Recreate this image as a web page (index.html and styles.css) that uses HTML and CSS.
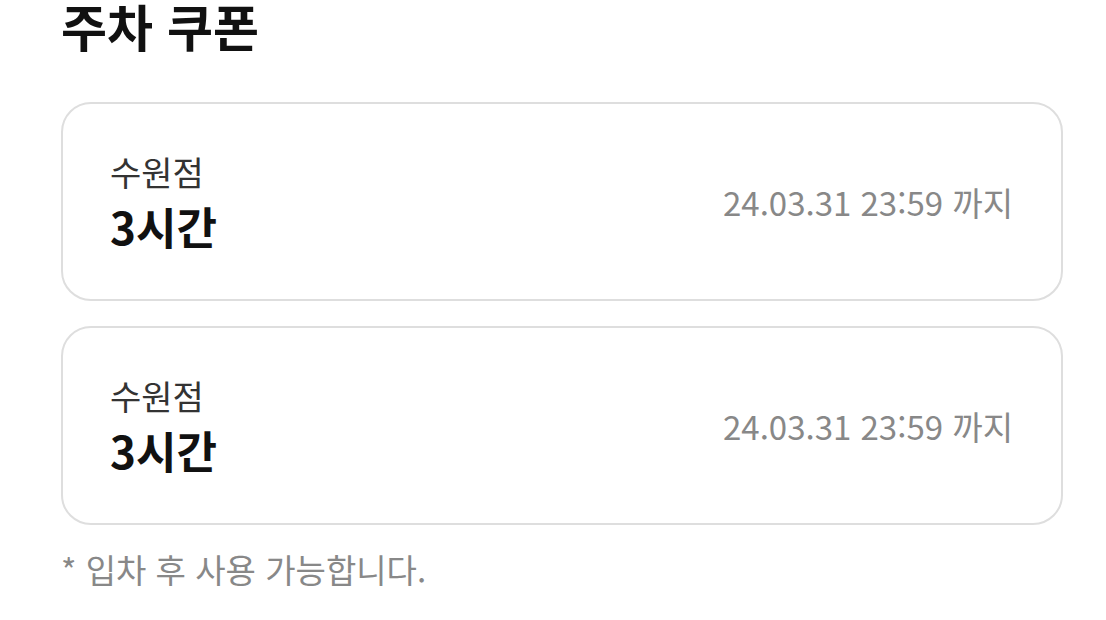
FILE: index.html
```html
<!DOCTYPE html>
<html lang="ko">
<head>
  <meta charset="UTF-8">
  <title>주차 쿠폰</title>
  <link rel="stylesheet" href="styles.css">
</head>
<body>
  <div class="page">
    <h2 class="title">주차 쿠폰</h2>

    <div class="coupon-list">
      <div class="coupon">
        <div class="coupon-info">
          <p class="store">수원점</p>
          <p class="duration">3시간</p>
        </div>
        <p class="expire">24.03.31 23:59 까지</p>
      </div>

      <div class="coupon">
        <div class="coupon-info">
          <p class="store">수원점</p>
          <p class="duration">3시간</p>
        </div>
        <p class="expire">24.03.31 23:59 까지</p>
      </div>
    </div>

    <p class="notice">* 입차 후 사용 가능합니다.</p>
  </div>
</body>
</html>
```

FILE: styles.css
```css
body {
  margin: 0;
  padding: 0;
  background: #fff;
  font-family: "Noto Sans CJK KR", "Noto Sans", sans-serif;
  color: #111;
}

.page {
  width: 1002px;
  padding: 0 0 0 61px;
}

.title {
  margin: 0;
  font-size: 50px;
  font-weight: 700;
  line-height: 50px;
  color: #111;
}

.coupon-list {
  display: flex;
  flex-direction: column;
  gap: 25px;
  margin-top: 52px;
}

.coupon {
  display: flex;
  justify-content: space-between;
  align-items: center;
  height: 199px;
  box-sizing: border-box;
  padding: 0 48px 0 47px;
  border: 2px solid #dedede;
  border-radius: 30px;
}

.coupon-info p {
  margin: 0;
}

.store {
  font-size: 34px;
  line-height: 48px;
  color: #333;
}

.duration {
  font-size: 44px;
  font-weight: 700;
  line-height: 60px;
  color: #111;
}

.expire {
  margin: 0;
  font-size: 33px;
  color: #888;
}

.notice {
  margin: 20px 0 0;
  font-size: 33px;
  color: #888;
}
```
